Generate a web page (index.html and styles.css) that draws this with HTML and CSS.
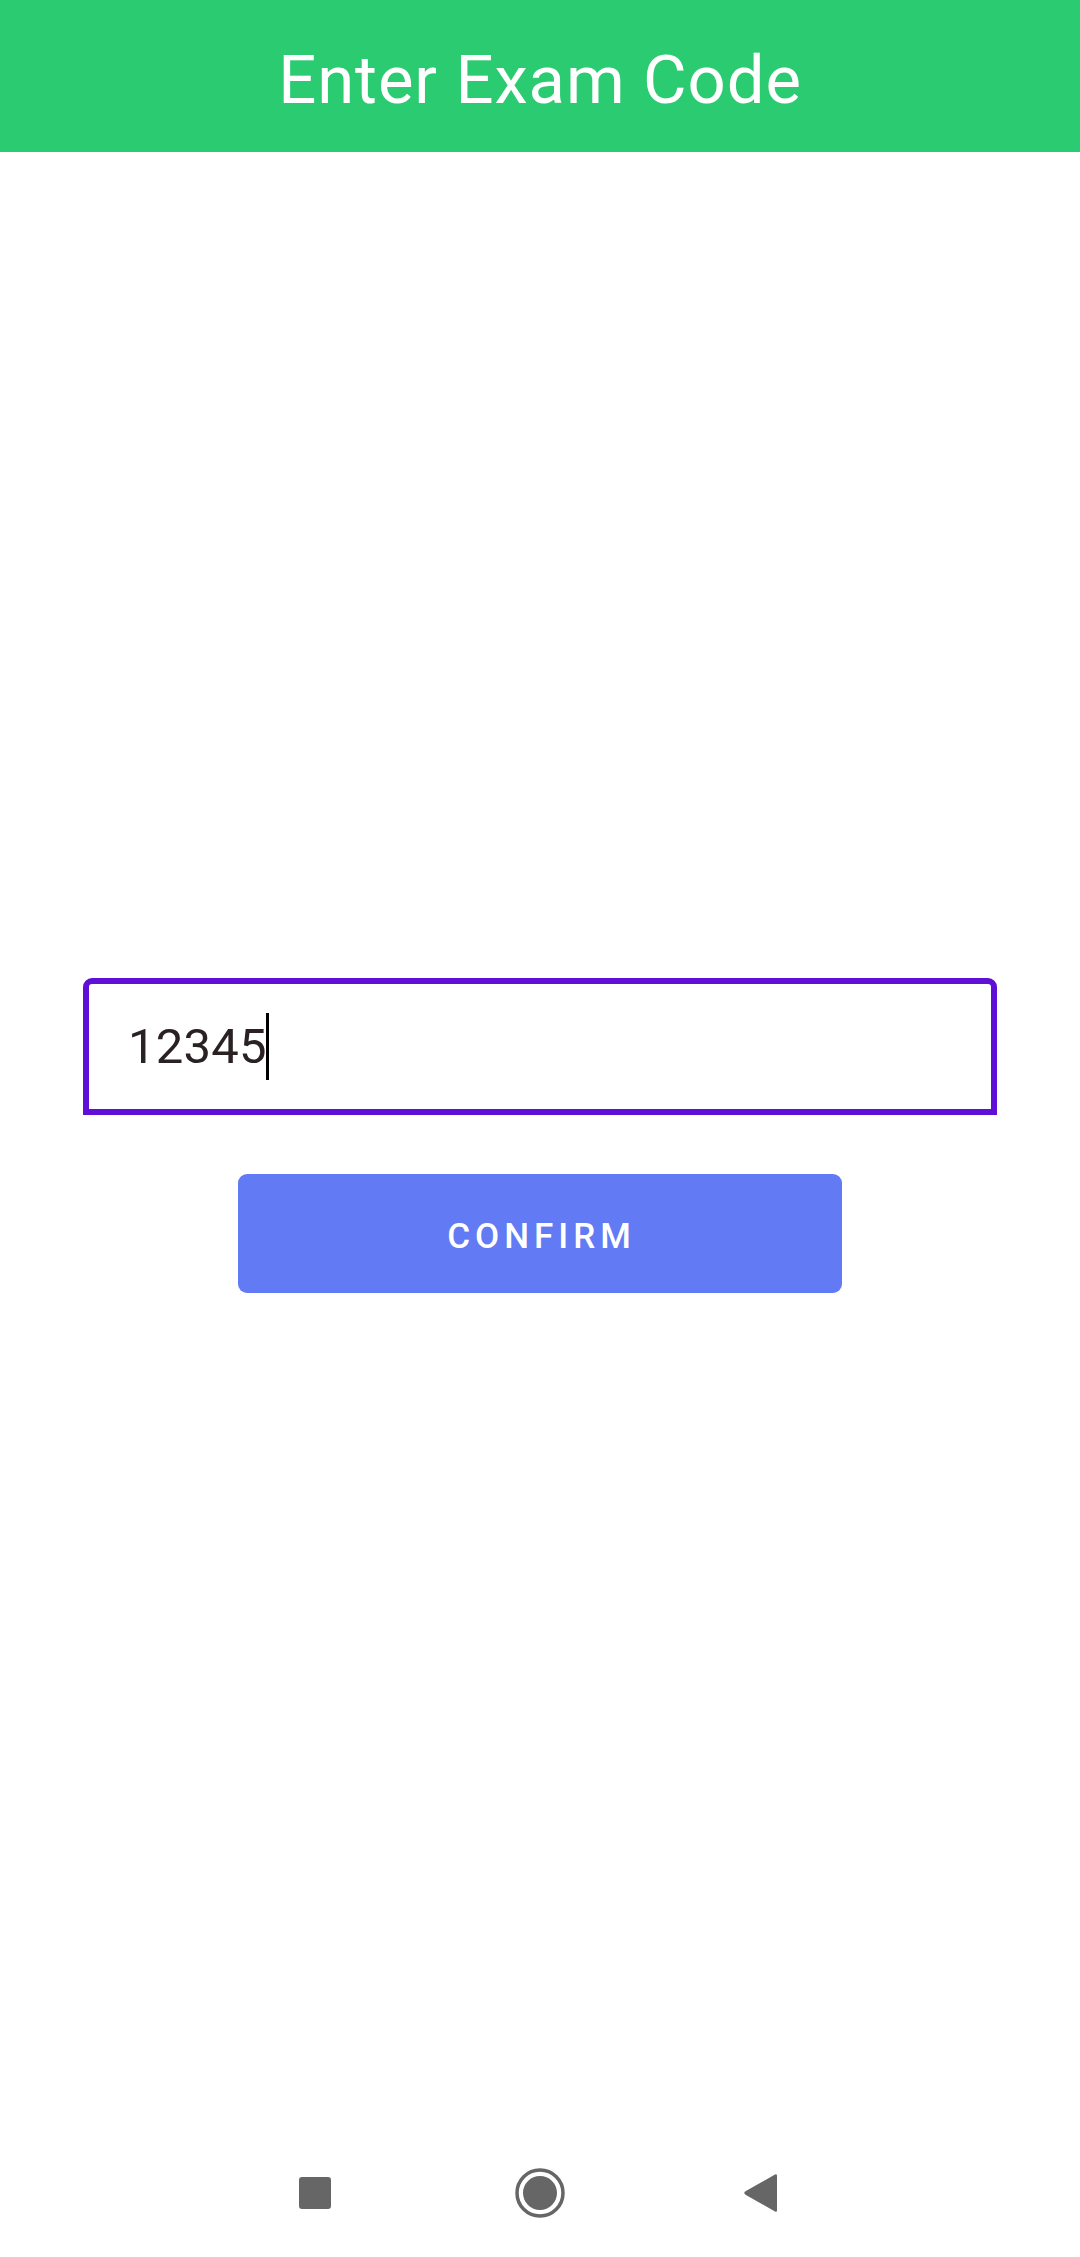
FILE: index.html
```html
<!DOCTYPE html>
<html lang="en">
<head>
<meta charset="utf-8">
<title>Enter Exam Code</title>
<link rel="stylesheet" href="styles.css">
</head>
<body>
<div class="screen">
  <header class="appbar">
    <h1 class="appbar-title">Enter Exam Code</h1>
  </header>
  <main class="content">
    <div class="field">
      <span class="field-value">12345</span><span class="caret"></span>
    </div>
    <button class="confirm" type="button">CONFIRM</button>
  </main>
  <nav class="navbar">
    <span class="nav-item nav-recent">
      <svg width="50" height="50" viewBox="0 0 50 50"><rect x="9" y="9" width="32" height="32" rx="3" fill="#666666"/></svg>
    </span>
    <span class="nav-item nav-home">
      <svg width="50" height="50" viewBox="0 0 50 50"><circle cx="25" cy="25" r="23" fill="none" stroke="#666666" stroke-width="3.5"/><circle cx="25" cy="25" r="17" fill="#666666"/></svg>
    </span>
    <span class="nav-item">
      <svg width="50" height="50" viewBox="0 0 50 50"><path d="M9.5 23.3 L39 6.6 Q41 5.6 41 7.8 V42.2 Q41 44.4 39 43.4 L9.5 26.7 Q7 25 9.5 23.3 Z" fill="#666666"/></svg>
    </span>
  </nav>
</div>
</body>
</html>
```

FILE: styles.css
```css
html, body {
  margin: 0;
  padding: 0;
  background: #ffffff;
}

.screen {
  width: 1080px;
  height: 2257px;
  display: flex;
  flex-direction: column;
  font-family: Roboto, "Noto Sans", sans-serif;
}

.appbar {
  height: 152px;
  background: #2bcc71;
  display: flex;
  align-items: center;
  justify-content: center;
  flex-shrink: 0;
}

.appbar-title {
  margin: 0;
  color: #ffffff;
  font-size: 67px;
  font-weight: 400;
  line-height: 1;
  letter-spacing: 0.9px;
  padding-top: 8px;
}

.content {
  flex: 1;
  display: flex;
  flex-direction: column;
  align-items: center;
  padding-top: 826px;
}

.field {
  box-sizing: border-box;
  width: 914px;
  height: 137px;
  border: 6px solid #6010d6;
  border-radius: 9px 9px 0 0;
  display: flex;
  align-items: center;
  padding-left: 39px;
}

.field-value {
  font-size: 49px;
  color: #2a2222;
  line-height: 1;
  letter-spacing: 0.2px;
}

.caret {
  width: 3px;
  height: 67px;
  background: #000000;
  margin-left: -1px;
}

.confirm {
  margin-top: 59px;
  width: 604px;
  height: 119px;
  border: none;
  border-radius: 9px;
  background: #627af3;
  color: #ffffff;
  font-family: Roboto, "Noto Sans", sans-serif;
  font-size: 35px;
  font-weight: 500;
  letter-spacing: 5px;
  padding: 5px 0 0 3px;
}

.navbar {
  height: 126px;
  flex-shrink: 0;
  display: flex;
  justify-content: flex-start;
  align-items: flex-start;
  padding: 37px 0 0 290px;
  box-sizing: border-box;
}

.nav-item {
  width: 50px;
  height: 50px;
  display: block;
}

.nav-recent {
  margin-right: 175px;
}

.nav-home {
  margin-right: 171px;
}

.nav-item svg {
  display: block;
}
```
